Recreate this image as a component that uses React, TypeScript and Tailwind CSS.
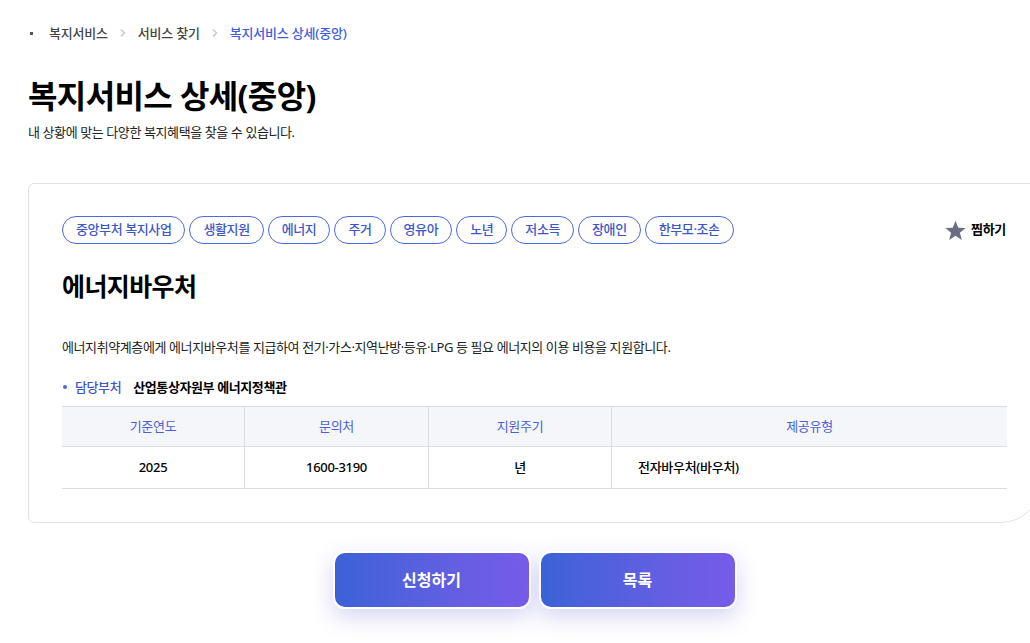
import React from "react";

const tags = ["중앙부처 복지사업", "생활지원", "에너지", "주거", "영유아", "노년", "저소득", "장애인", "한부모·조손"];

function Chevron() {
  return (
    <svg width="8" height="10" viewBox="0 0 8 10" className="mx-[11px]">
      <path d="M2 1.5 L5.5 5 L2 8.5" fill="none" stroke="#c4c6cc" strokeWidth="1.4" />
    </svg>
  );
}

export default function App() {
  return (
    <div className="w-full min-h-[643px] overflow-hidden bg-white text-[#222] [font-family:'Noto_Sans','Noto_Sans_CJK_KR',sans-serif]">
      <div className="ml-[28px] w-[1013px] shrink-0">
        {/* breadcrumb */}
        <div className="flex items-center pt-[23px] h-[43px] text-[13px] leading-[20px] tracking-[-0.2px]">
          <span className="w-[3px] h-[3px] bg-[#555] mr-[16px] ml-[2px]" />
          <span className="text-[#444] font-medium">복지서비스</span>
          <Chevron />
          <span className="text-[#444] font-medium">서비스 찾기</span>
          <Chevron />
          <span className="text-[#3d5de0] font-medium">복지서비스 상세(중앙)</span>
        </div>

        <h1 className="mt-[32px] text-[32px] leading-[42px] font-bold text-black tracking-[-0.6px]">복지서비스 상세(중앙)</h1>
        <p className="mt-[5px] text-[13px] leading-[20px] text-[#222] tracking-[-0.4px]">내 상황에 맞는 다양한 복지혜택을 찾을 수 있습니다.</p>

        {/* card */}
        <div className="mt-[41px] border border-[#e2e2e2] rounded-[6px] rounded-br-[40px] px-[33px] pt-[32px] pb-[33px]">
          <div className="flex items-center justify-between">
            <div className="flex gap-[4px]">
              {tags.map((t) => (
                <span
                  key={t}
                  className="h-[28px] px-[13px] flex items-center rounded-full border border-[#4b6ae0] text-[#3d57c9] text-[13px] font-medium tracking-[-0.4px]"
                >
                  {t}
                </span>
              ))}
            </div>
            <div className="flex items-center gap-[4px] pr-[1px]">
              <svg width="23" height="23" viewBox="0 0 24 24">
                <path
                  d="M12 1.8 L14.9 9.1 L22.6 9.4 L16.6 14.3 L18.6 21.9 L12 17.6 L5.4 21.9 L7.4 14.3 L1.4 9.4 L9.1 9.1 Z"
                  fill="#6b6e82"
                />
              </svg>
              <span className="text-[13px] font-bold text-black tracking-[-0.3px]">찜하기</span>
            </div>
          </div>

          <h2 className="mt-[24px] text-[25px] leading-[36px] font-bold text-black tracking-[-0.6px]">에너지바우처</h2>

          <p className="mt-[33px] text-[13px] leading-[20px] text-[#222] tracking-[-0.4px]">
            에너지취약계층에게 에너지바우처를 지급하여 전기·가스·지역난방·등유·LPG 등 필요 에너지의 이용 비용을 지원합니다.
          </p>

          <div className="mt-[20px] flex items-center text-[13px] leading-[20px] tracking-[-0.4px]">
            <span className="w-[4px] h-[4px] rounded-full bg-[#4b6ae0] ml-[1px] mr-[8px]" />
            <span className="text-[#3d57c9] font-medium">담당부처</span>
            <span className="ml-[12px] font-bold text-black">산업통상자원부 에너지정책관</span>
          </div>

          <div className="mt-[9px] border-t border-b border-[#dcdde2] text-[13px] tracking-[-0.3px]">
            <div className="grid grid-cols-[182px_184px_183px_1fr] bg-[#f5f6fa] h-[40px] border-b border-[#dcdde2] text-[#4a5fd9]">
              <div className="flex items-center justify-center">기준연도</div>
              <div className="flex items-center justify-center border-l border-[#dcdde2]">문의처</div>
              <div className="flex items-center justify-center border-l border-[#dcdde2]">지원주기</div>
              <div className="flex items-center justify-center border-l border-[#dcdde2]">제공유형</div>
            </div>
            <div className="grid grid-cols-[182px_184px_183px_1fr] h-[41px] text-black font-medium">
              <div className="flex items-center justify-center">2025</div>
              <div className="flex items-center justify-center border-l border-[#dcdde2]">1600-3190</div>
              <div className="flex items-center justify-center border-l border-[#dcdde2]">년</div>
              <div className="flex items-center pl-[26px] border-l border-[#dcdde2]">전자바우처(바우처)</div>
            </div>
          </div>
        </div>

        {/* buttons */}
        <div className="mt-[28px] flex justify-center gap-[8px]">
          <button className="w-[198px] h-[58px] rounded-[12px] border-2 border-white bg-gradient-to-r from-[#3a62d7] to-[#775be9] text-white text-[16px] font-bold shadow-[0_8px_22px_rgba(110,100,220,0.28)]">
            신청하기
          </button>
          <button className="w-[198px] h-[58px] rounded-[12px] border-2 border-white bg-gradient-to-r from-[#3a62d7] to-[#775be9] text-white text-[16px] font-bold shadow-[0_8px_22px_rgba(110,100,220,0.28)]">
            목록
          </button>
        </div>
      </div>
    </div>
  );
}
